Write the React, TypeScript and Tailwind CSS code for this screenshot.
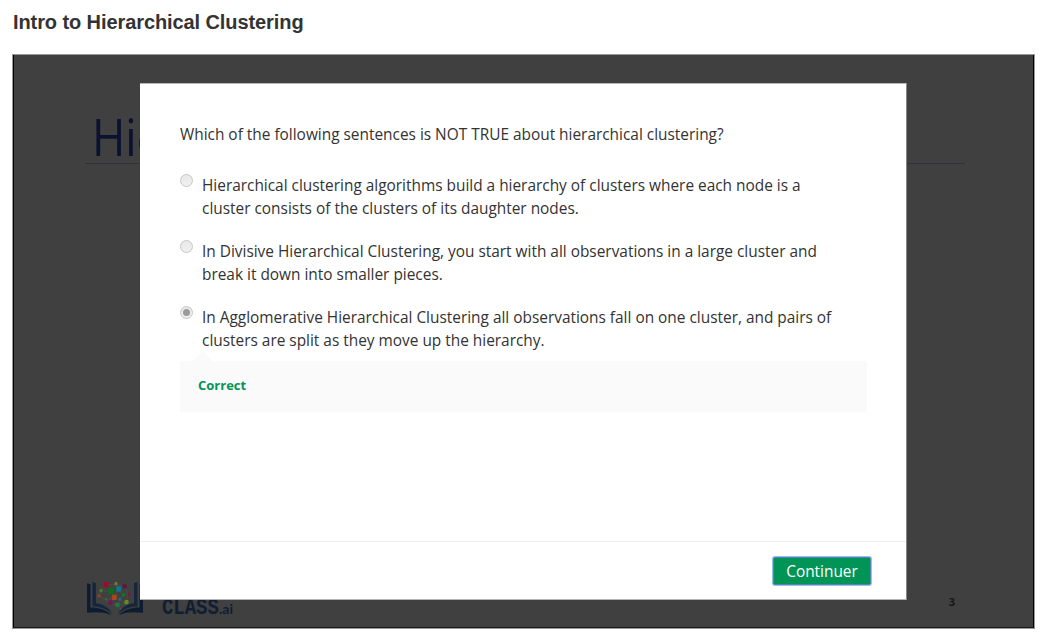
import React from "react";

type Answer = { lines: [string, string]; selected?: boolean };

const answers: Answer[] = [
  {
    lines: [
      "Hierarchical clustering algorithms build a hierarchy of clusters where each node is a",
      "cluster consists of the clusters of its daughter nodes.",
    ],
  },
  {
    lines: [
      "In Divisive Hierarchical Clustering, you start with all observations in a large cluster and",
      "break it down into smaller pieces.",
    ],
  },
  {
    lines: [
      "In Agglomerative Hierarchical Clustering all observations fall on one cluster, and pairs of",
      "clusters are split as they move up the hierarchy.",
    ],
    selected: true,
  },
];

function Radio({ selected }: { selected?: boolean }) {
  return (
    <span
      role="radio"
      aria-checked={!!selected}
      className="flex h-[13px] w-[13px] shrink-0 items-center justify-center rounded-full border border-[#c6c6c6] bg-gradient-to-b from-[#e8e8e8] to-[#f0f0f0]"
    >
      {selected && <span className="h-[7px] w-[7px] rounded-full bg-[#9a9a9a]" />}
    </span>
  );
}

const dots: [number, number, number, string][] = [
  [19, 4.5, 5, "#a0082c"],
  [29, 3.5, 3, "#7d7a1c"],
  [37.5, 6, 4, "#6b0f3e"],
  [24.3, 10.5, 6, "#0b6e1c"],
  [31.7, 8.5, 5, "#10758f"],
  [14, 10, 3, "#4c7d28"],
  [42, 13.5, 3, "#7c1648"],
  [12, 15, 3, "#8a4420"],
  [27.3, 16.5, 5, "#a84420"],
  [36.5, 14, 3, "#0c7a2c"],
  [33, 18, 2.5, "#157080"],
  [19, 18, 2, "#38762c"],
  [23.5, 21.5, 4, "#7c1054"],
  [30.5, 23.5, 4, "#1c7a42"],
  [39.5, 21, 4, "#6b8a1a"],
  [34, 28, 2, "#7b6b27"],
];

function BookHalf() {
  return (
    <>
      <path d="M0 3 3.5 4V26C12 26 19 28 24 33 17 30 9 30 0 31Z" fill="#0d1c30" />
      <path d="M5.5 2 9 3V22C17 23 23 27 25 32 19 27 13 25 5.5 25Z" fill="#13273f" />
    </>
  );
}

function BookLogo() {
  return (
    <svg width="56" height="37" viewBox="0 0 56 35" preserveAspectRatio="none" aria-hidden="true">
      <path
        d="M12 15 14 10 19 5 29 4 37 6 41 13 39 22 34 28 30 24 23 22 19 19 12 15M19 5l5 6-10-1m10 1 5-7 2 5 6-3-6 3 5 5 5-1m-17-2 3 6 4-8m-12 10 8-2-4 5m4-5 6 2 3-5m-3 5-3 5 9-2-6-3"
        fill="none"
        stroke="#4d5a50"
        strokeWidth="0.5"
      />
      {dots.map(([x, y, s, color], i) => (
        <rect key={i} x={x - s / 2} y={y - s / 2} width={s} height={s} rx="1" fill={color} />
      ))}
      <BookHalf />
      <g transform="translate(56 0) scale(-1 1)">
        <BookHalf />
      </g>
    </svg>
  );
}

export default function App() {
  return (
    <main className="h-[636px] w-[1047px] overflow-hidden bg-white pl-3 text-[#333]">
      <h1 className="h-[54px] pt-[7px] pl-px font-['Liberation_Sans',sans-serif] text-[20px] leading-[30px] font-bold tracking-[-0.09px] whitespace-nowrap">
        Intro to Hierarchical Clustering
      </h1>
      <section className="relative h-[575px] w-[1023px] border border-[#999] bg-[#404040]">
        <div className="flex h-full flex-col border-x border-b border-x-black border-b-[#171717] pl-[71px]">
          <header className="h-[109px] w-[880px] border-b border-[#303037] pt-[46px] pl-[7px]">
            <div className="w-max origin-left scale-x-[0.87] font-['Open_Sans',sans-serif] text-[52px] leading-[70px] font-medium text-[#0b1230]">
              Hie
            </div>
          </header>
          <footer className="mt-auto mb-[11px] flex h-[36px] pl-[2px]">
            <BookLogo />
            <div className="mt-[16px] ml-[19px] flex items-baseline leading-[26px] text-[#101d33]">
              <span className="w-[57px] origin-left scale-x-[0.86] font-['Liberation_Mono',monospace] text-[22px] font-bold">
                CLASS
              </span>
              <span className="font-['Lato',sans-serif] text-[14px] font-bold">.ai</span>
            </div>
            <span className="mt-[12px] mr-[78px] ml-auto font-['Open_Sans',sans-serif] text-[11px] leading-[20px] font-bold text-[#161616]">
              3
            </span>
          </footer>
        </div>

        <div
          role="dialog"
          className="absolute top-[28px] left-[127px] flex h-[517px] w-[767px] flex-col border-t border-r border-b border-t-[#b5b5b5] border-r-[#858585] border-b-[#b5b5b5] bg-white font-['Open_Sans',sans-serif] text-[16px] leading-[23px]"
        >
          <div className="flex-1 pt-[39px] pr-[39px] pl-10">
            <p className="mb-[28px] w-max origin-left scale-x-[0.9625] whitespace-nowrap">
              Which of the following sentences is NOT TRUE about hierarchical clustering?
            </p>
            <div role="radiogroup" className="flex flex-col gap-5">
              {answers.map(({ lines, selected }) => (
                <div key={lines[0]} className="flex">
                  <Radio selected={selected} />
                  <p className="ml-[9px] w-max origin-left scale-x-[0.9625] whitespace-nowrap">
                    {lines[0]}
                    <br />
                    {lines[1]}
                  </p>
                </div>
              ))}
            </div>
            <div className="relative mt-[9px] h-[51px] bg-[#fafafa] pt-[13px] pl-[18px] text-[13px] leading-[22px] font-bold text-[#009456]">
              <svg className="absolute -top-[10px] left-[13px]" width="20" height="10" aria-hidden="true">
                <path d="M0 10 10 0l10 10Z" fill="#fafafa" />
              </svg>
              Correct
            </div>
          </div>
          <footer className="flex h-[58px] justify-end border-t border-[#eee] pt-[15px] pr-[35px]">
            <button className="h-[28px] w-[98px] rounded-[2px] border border-[#4c87b4] bg-[#009456] text-[16px] leading-[26px] text-white ring-1 ring-[#9fbcec]">
              <span className="block scale-x-[0.9625]">Continuer</span>
            </button>
          </footer>
        </div>
      </section>
    </main>
  );
}
